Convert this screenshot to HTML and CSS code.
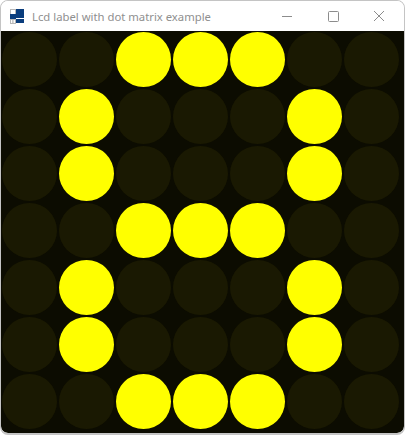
FILE: index.html
```html
<!DOCTYPE html>
<html>
<head>
<meta charset="utf-8">
<link rel="stylesheet" href="styles.css">
</head>
<body>
<div class="window">
  <div class="titlebar">
    <svg class="appicon" width="15" height="15" viewBox="0 0 15 15">
      <rect x="0.5" y="0.5" width="5" height="5" fill="#fff" stroke="#b8b8b8"/>
      <rect x="0" y="5" width="6" height="5" fill="#0a3d7d"/>
      <rect x="0.5" y="10.5" width="2.5" height="4" fill="#fff" stroke="#b8b8b8"/>
      <rect x="3" y="10.5" width="2.5" height="4" fill="#fff" stroke="#b8b8b8"/>
      <rect x="6" y="0" width="8" height="9" fill="#0a3d7d"/>
      <rect x="6" y="10" width="8" height="4" fill="#0a3d7d"/>
    </svg>
    <span class="title">Lcd label with dot matrix example</span>
    <div class="controls">
      <svg class="ctl" width="46" height="30" viewBox="0 0 46 30"><line x1="18" y1="15.5" x2="28" y2="15.5" stroke="#8c8c8c" stroke-width="1"/></svg>
      <svg class="ctl" width="46" height="30" viewBox="0 0 46 30"><rect x="18.5" y="10.5" width="10" height="10" rx="1" fill="none" stroke="#8c8c8c" stroke-width="1"/></svg>
      <svg class="ctl" width="46" height="30" viewBox="0 0 46 30"><path d="M18 10 L28 20 M28 10 L18 20" stroke="#8c8c8c" stroke-width="1"/></svg>
    </div>
  </div>
  <div class="content">
    <div class="matrix">
      <div class="dot"></div><div class="dot"></div><div class="dot on"></div><div class="dot on"></div><div class="dot on"></div><div class="dot"></div><div class="dot"></div>
      <div class="dot"></div><div class="dot on"></div><div class="dot"></div><div class="dot"></div><div class="dot"></div><div class="dot on"></div><div class="dot"></div>
      <div class="dot"></div><div class="dot on"></div><div class="dot"></div><div class="dot"></div><div class="dot"></div><div class="dot on"></div><div class="dot"></div>
      <div class="dot"></div><div class="dot"></div><div class="dot on"></div><div class="dot on"></div><div class="dot on"></div><div class="dot"></div><div class="dot"></div>
      <div class="dot"></div><div class="dot on"></div><div class="dot"></div><div class="dot"></div><div class="dot"></div><div class="dot on"></div><div class="dot"></div>
      <div class="dot"></div><div class="dot on"></div><div class="dot"></div><div class="dot"></div><div class="dot"></div><div class="dot on"></div><div class="dot"></div>
      <div class="dot"></div><div class="dot"></div><div class="dot on"></div><div class="dot on"></div><div class="dot on"></div><div class="dot"></div><div class="dot"></div>
    </div>
  </div>
</div>
</body>
</html>
```
FILE: styles.css
```css
html, body {
  margin: 0;
  padding: 0;
  background: #ffffff;
}
.window {
  width: 405px;
  height: 435px;
  box-sizing: border-box;
  border: 1px solid #c4c4c4;
  border-bottom-width: 2px;
  border-radius: 8px;
  overflow: hidden;
  display: flex;
  flex-direction: column;
  background: #ffffff;
}
.titlebar {
  height: 30px;
  flex: none;
  display: flex;
  align-items: center;
  background: #ffffff;
}
.appicon {
  margin-left: 9px;
  margin-right: 7px;
  flex: none;
}
.title {
  font-family: "Noto Sans", "Open Sans", sans-serif;
  font-size: 11.3px;
  color: #8f8f8f;
  white-space: nowrap;
}
.controls {
  margin-left: auto;
  display: flex;
  height: 30px;
  margin-right: 2px;
}
.ctl {
  display: block;
}
.content {
  flex: 1;
  background: #0c0c01;
  border-bottom-left-radius: 7px;
  border-bottom-right-radius: 7px;
}
.matrix {
  display: grid;
  grid-template-columns: repeat(7, 57px);
  grid-auto-rows: 57px;
}
.dot {
  margin: 1px;
  border-radius: 50%;
  background: #1a1902;
}
.dot.on {
  background: #ffff00;
}
```
